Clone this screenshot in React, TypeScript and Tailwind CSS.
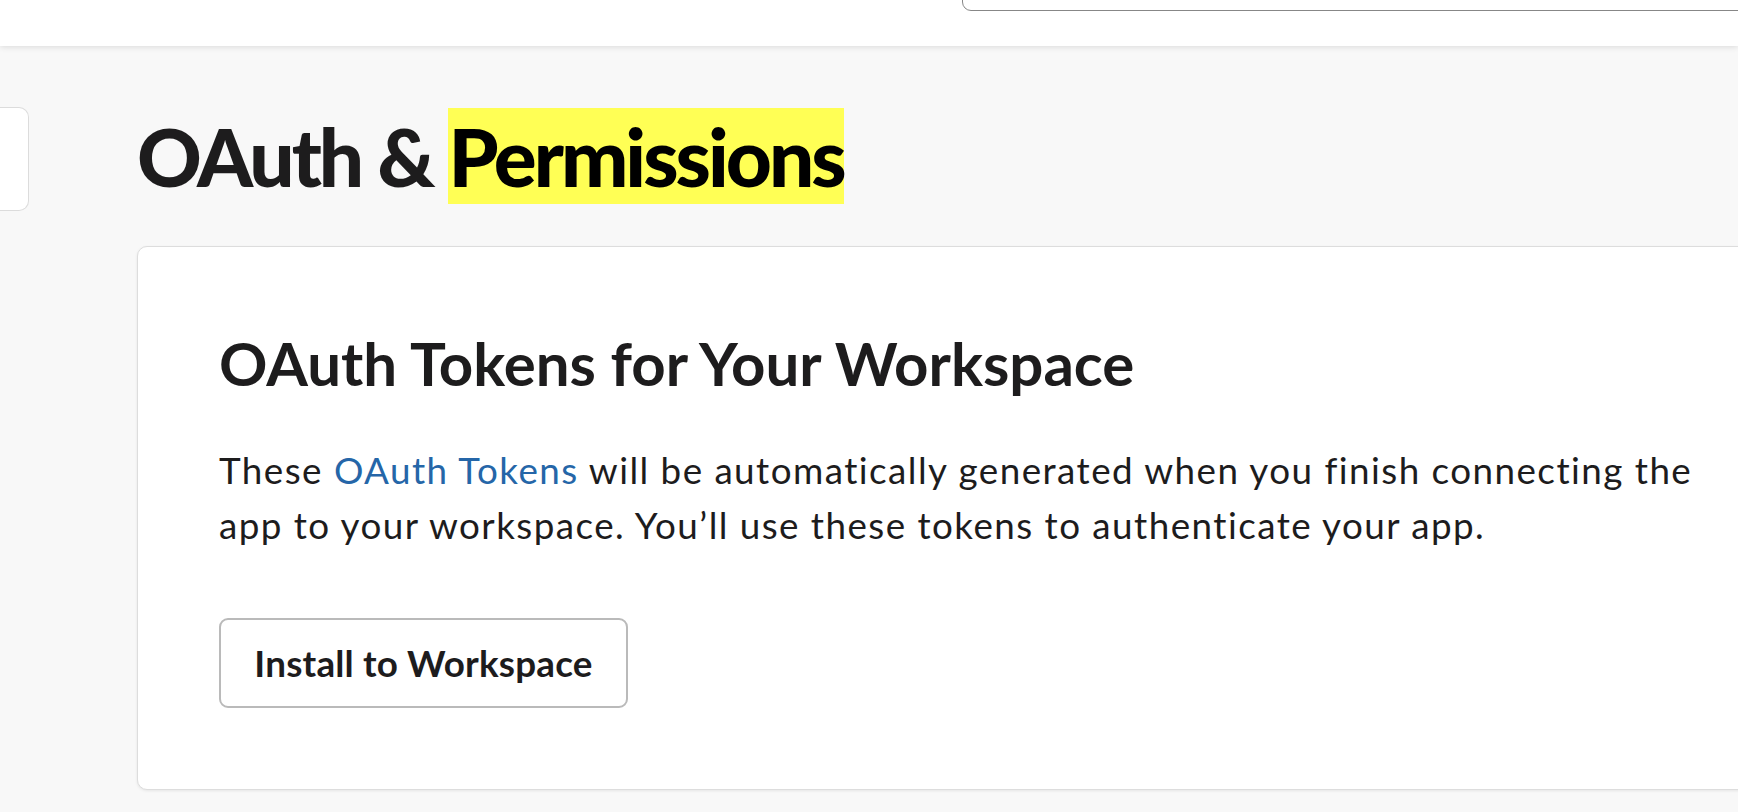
export default function App() {
  return (
    <div className="w-screen h-screen overflow-hidden bg-[#f8f8f8] font-[Lato,sans-serif] text-[#1d1c1d]">
      <header className="relative z-10 h-[46px] bg-white shadow-[0_1px_6px_rgba(0,0,0,0.12)] flex items-start">
        <div className="ml-[962px] -mt-[40px] h-[51px] w-[900px] shrink-0 rounded-[9px] border-[1.5px] border-[#878787] bg-white" />
      </header>
      <div className="flex items-start">
        <div className="w-[29px] shrink-0 pt-[61px]">
          <div className="h-[104px] w-[29px] rounded-r-[10px] border border-l-0 border-[#dcdcdc] bg-white" />
        </div>
        <main className="ml-[108px] pt-[62px] shrink-0">
          <h1 className="text-[80px] leading-[96px] font-black tracking-[-3px] whitespace-nowrap">
            OAuth &amp; <mark className="bg-[#ffff55] text-black">Permissions</mark>
          </h1>
          <section className="mt-[42px] w-[1700px] rounded-[10px] border border-[#dddddd] bg-white shadow-[0_1px_3px_rgba(0,0,0,0.08)] pl-[81px] pt-[80px] pb-[81px]">
            <h2 className="text-[60px] leading-[72px] font-bold whitespace-nowrap">
              OAuth Tokens for Your Workspace
            </h2>
            <p className="mt-[44px] w-[1520px] text-[36.8px] leading-[55.2px] tracking-[1.45px]">
              These <a className="text-[#2566a8]">OAuth Tokens</a> will be automatically generated when you finish connecting the app to your workspace. You’ll use these tokens to authenticate your app.
            </p>
            <button className="mt-[64.6px] flex h-[90px] w-[409px] items-center justify-center rounded-[9px] border-2 border-[#bababa] bg-white text-[36.8px] leading-[44px] font-bold tracking-[0.2px] text-[#1d1c1d]">
              Install to Workspace
            </button>
          </section>
        </main>
      </div>
    </div>
  );
}
